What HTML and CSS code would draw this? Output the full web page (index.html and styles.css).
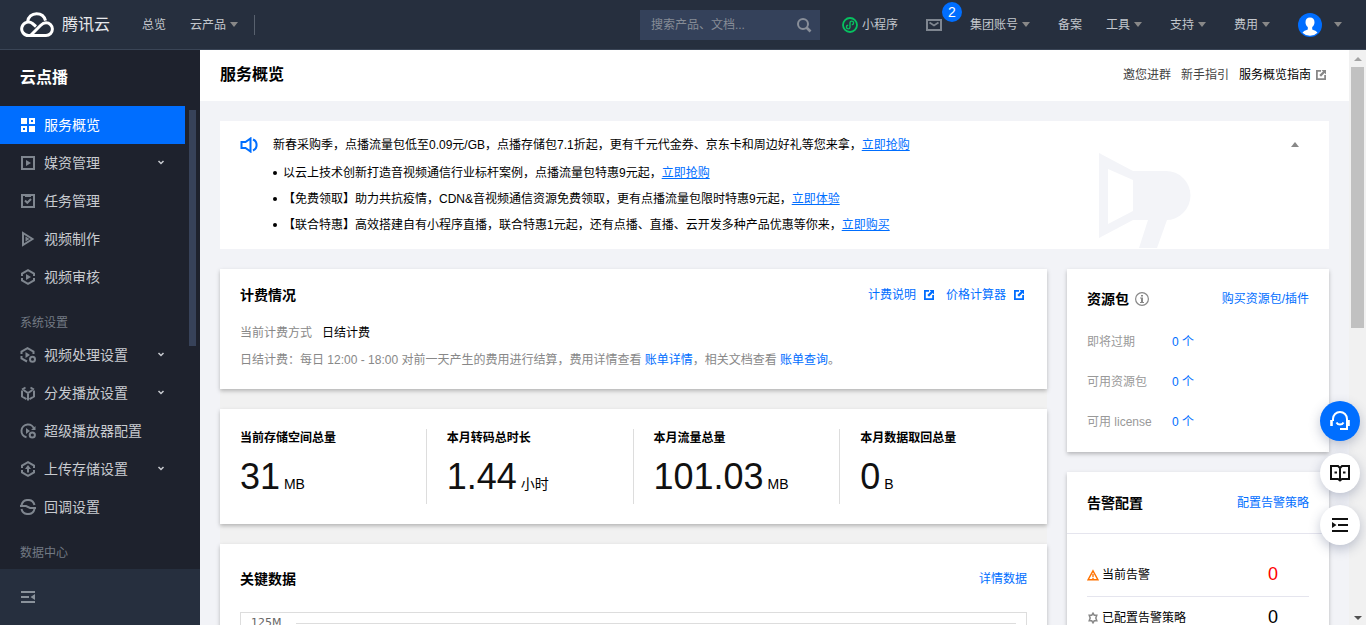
FILE: index.html
```
<!DOCTYPE html>
<html lang="zh-CN">
  <head>
    <meta charset="UTF-8">
    <meta name="viewport" content="width=device-width, initial-scale=1.0">
    <title>服务概览 - 云点播</title>
    <link rel="stylesheet" href="styles.css">
  </head>
  <body>
    <!-- shared icons -->
    <svg class="sprite" aria-hidden="true">
      <symbol id="share" viewBox="0 0 10 10">
        <path d="M5 0H0v10h10V5H8.200v3.200H1.800V1.800H5z"/>
        <path d="M5.500 0H10v4.500L8.600 3.100 5 6.700 3.300 5l3.600-3.600z"/>
      </symbol>
      <symbol id="chevron" viewBox="0 0 8 8">
        <path d="M1.500 2 4 4.500 6.500 2" fill="none" stroke="currentColor" stroke-width="1.500"/>
      </symbol>
    </svg>

    <header class="topbar">
      <a class="logo" href="#">
        <svg width="34" height="26" viewBox="0 0 34 26" fill="none" stroke="#fff" stroke-width="3">
          <path d="M11 23.500H8.500a6.700 6.700 0 1 1 4-12l3.500 3M7.500 10C8 5 12 1.700 16.500 1.700c4.500 0 8 2.800 9 7"/>
          <path d="M10.500 23.500 20.500 13.500c1.600-1.600 3.200-2.800 5.500-2.800a6.400 6.400 0 0 1 0 12.800H10"/>
        </svg>
        <span>腾讯云</span>
      </a>
      <nav class="nav-left">
        <a href="#">总览</a>
        <button>云产品<i class="caret"></i></button>
      </nav>
      <form class="search">
        <input type="text" placeholder="搜索产品、文档..." aria-label="搜索产品、文档">
        <button type="button" aria-label="搜索">
          <svg width="16" height="16" viewBox="0 0 16 16" fill="none" stroke="#888e99" stroke-width="2">
            <circle cx="7" cy="7" r="5"/><path d="m10.500 10.500 4 4" stroke-width="2.600"/>
          </svg>
        </button>
      </form>
      <nav class="nav-right">
        <a class="mini" href="#">
          <svg width="16" height="16" viewBox="0 0 16 16" fill="none" stroke="#07c160">
            <circle cx="8" cy="8" r="7" stroke-width="1.800"/>
            <path d="M6.200 8.300a1.800 1.800 0 1 0 1.800 1.900V5.800a1.800 1.800 0 1 1 1.800 1.900" stroke-width="1.400"/>
          </svg>
          小程序
        </a>
        <a class="mail" href="#" aria-label="消息">
          <svg width="16" height="12" viewBox="0 0 16 12" fill="none" stroke="#7f8690" stroke-width="2">
            <path d="M1 1h14v10H1z"/><path d="m3.500 3.500 4.500 3 4.500-3" stroke-width="1.800"/>
          </svg>
          <span class="badge">2</span>
        </a>
        <button>集团账号<i class="caret"></i></button>
        <a class="record" href="#">备案</a>
        <button>工具<i class="caret"></i></button>
        <button>支持<i class="caret"></i></button>
        <button>费用<i class="caret"></i></button>
        <button class="user" aria-label="账号">
          <svg width="24" height="24" viewBox="0 0 24 24">
            <circle cx="12" cy="12" r="12" fill="#006eff"/>
            <path d="M12 4.500c-2.900 0-4.500 2-4.500 4.700 0 2 .9 3.800 2.300 4.900v2.400c-2.500.8-4.300 1.800-5.300 3.200a10.700 10.700 0 0 0 15 0c-1-1.400-2.800-2.400-5.300-3.200v-2.400c1.400-1.100 2.300-2.900 2.300-4.900 0-2.700-1.600-4.700-4.500-4.700z" fill="#fff"/>
          </svg>
          <i class="caret"></i>
        </button>
      </nav>
    </header>

    <div class="page">
      <aside class="sidebar">
        <h2>云点播</h2>
        <div class="menu">
          <nav class="menu-list">
            <a class="active" href="#">
              <svg viewBox="0 0 16 16"><path d="M1 1h6v6H1zM9 1h6v6H9zm2 2v2h2V3zM1 9h6v6H1zm2 2v2h2v-2zM9 9h6v6H9z" fill="#fff" fill-rule="evenodd"/></svg>
              服务概览
            </a>
            <a href="#">
              <svg viewBox="0 0 16 16"><path class="line" d="M2 2h12v12H2z"/><path d="M6 5v6l5-3z"/></svg>
              媒资管理
              <svg class="chevron"><use href="#chevron"/></svg>
            </a>
            <a href="#">
              <svg viewBox="0 0 16 16"><path class="line" d="M2 2h12v12H2z"/><path class="line" d="m5 7.500 2.300 2.300L11 6"/><path d="M5 2h6v2H5z"/></svg>
              任务管理
            </a>
            <a href="#">
              <svg viewBox="0 0 16 16"><path class="line" d="M3 2v12l9.500-6z"/><path d="M5.500 5.500v5L9.500 8z"/></svg>
              视频制作
            </a>
            <a href="#">
              <svg viewBox="0 0 16 16"><path class="line" d="M2 7V4.500l6-3.300 6 3.300V7M2 9v2.500l6 3.300 6-3.300V9"/><path d="M6 5v6l5-3z"/></svg>
              视频审核
            </a>
            <h3>系统设置</h3>
            <a href="#">
              <svg viewBox="0 0 16 16"><path class="line" d="M1.500 7V4.500l6-3.300 6 3.300V7M1.500 9v2.500l5.500 3"/><path d="M5.500 5v6l4.500-3z"/><circle class="line" cx="12.500" cy="12.300" r="2.500"/></svg>
              视频处理设置
              <svg class="chevron"><use href="#chevron"/></svg>
            </a>
            <a href="#">
              <svg viewBox="0 0 16 16"><path class="line" d="M2 5.500v6l4.500 2.600M14 5.500v6l-4.500 2.600M3.500 5 8 8l4.500-3M8 8v7.500M2 4.500l3.500-2M14 4.500l-3.500-2"/></svg>
              分发播放设置
              <svg class="chevron"><use href="#chevron"/></svg>
            </a>
            <a href="#">
              <svg viewBox="0 0 16 16"><path class="line" d="M6.500 14.300A6.500 6.500 0 1 1 14.300 6.500"/><path d="M6 5v6l4-3zM15.500 3v4H11z"/><circle class="line" cx="12.300" cy="12" r="2.600"/></svg>
              超级播放器配置
            </a>
            <a href="#">
              <svg viewBox="0 0 16 16"><path class="line" d="M2 7V4.500l6-3.300 6 3.300V7M2 9v2.500l6 3.300 6-3.300V9M8 7v4.500"/><path d="M8 4 5 8h6z"/></svg>
              上传存储设置
              <svg class="chevron"><use href="#chevron"/></svg>
            </a>
            <a href="#">
              <svg viewBox="0 0 16 16"><path class="line" d="M1.500 6a6.700 6.700 0 0 1 13 0M14.500 10a6.700 6.700 0 0 1-13 0M0 7h6l4 2h6"/></svg>
              回调设置
            </a>
            <h3>数据中心</h3>
          </nav>
          <div class="menu-scroll"></div>
        </div>
        <div class="sidebar-foot">
          <button aria-label="收起菜单">
            <svg width="14" height="12" viewBox="0 0 14 12" fill="#8a929b"><path d="M0 0h14v2H0zM0 5h8v2H0zM0 10h14v2H0zM14 3v6L9.500 6z"/></svg>
          </button>
        </div>
      </aside>

      <main class="main">
        <div class="page-head">
          <h1>服务概览</h1>
          <div class="head-links">
            <a class="soft" href="#">邀您进群</a>
            <a class="soft" href="#">新手指引</a>
            <a class="guide" href="#">服务概览指南<svg class="share"><use href="#share"/></svg></a>
          </div>
        </div>

        <div class="content">
          <section class="notice">
            <svg class="horn" width="18" height="16" viewBox="0 0 18 16" fill="none" stroke="#006eff" stroke-width="2">
              <path d="M1.500 5v6h4l5 3.500v-13l-5 3.500z"/><path d="M13 2.500a6 6 0 0 1 0 11"/>
            </svg>
            <div class="notice-text">
              <p>新春采购季，点播流量包低至0.09元/GB，点播存储包7.1折起，更有千元代金券、京东卡和周边好礼等您来拿，<a href="#">立即抢购</a></p>
              <ul>
                <li>以云上技术创新打造音视频通信行业标杆案例，点播流量包特惠9元起，<a href="#">立即抢购</a></li>
                <li>【免费领取】助力共抗疫情，CDN&amp;音视频通信资源免费领取，更有点播流量包限时特惠9元起，<a href="#">立即体验</a></li>
                <li>【联合特惠】高效搭建自有小程序直播，联合特惠1元起，还有点播、直播、云开发多种产品优惠等你来，<a href="#">立即购买</a></li>
              </ul>
            </div>
            <button class="fold" aria-label="收起"></button>
            <svg class="megaphone" width="92" height="95" viewBox="0 0 92 95" fill="#f3f4f8">
              <path d="M0 0l34 18h33a24.500 24.500 0 0 1 0 49H34L0 85zM9 16v55l25-13V27z" fill-rule="evenodd"/>
              <path d="M49 67h19L58 95H40z"/>
            </svg>
          </section>

          <div class="columns">
            <div class="col-left">
              <section class="card billing">
                <div class="card-head">
                  <h2>计费情况</h2>
                  <div class="card-links">
                    <a href="#">计费说明<svg class="share"><use href="#share"/></svg></a>
                    <a href="#">价格计算器<svg class="share"><use href="#share"/></svg></a>
                  </div>
                </div>
                <p class="mode">当前计费方式<b>日结计费</b></p>
                <p>日结计费：每日 12:00 - 18:00 对前一天产生的费用进行结算，费用详情查看 <a href="#">账单详情</a>，相关文档查看 <a href="#">账单查询</a>。</p>
              </section>

              <section class="card stats">
                <div class="stat">
                  <h3>当前存储空间总量</h3>
                  <p><strong>31</strong> MB</p>
                </div>
                <div class="stat">
                  <h3>本月转码总时长</h3>
                  <p><strong>1.44</strong> 小时</p>
                </div>
                <div class="stat">
                  <h3>本月流量总量</h3>
                  <p><strong>101.03</strong> MB</p>
                </div>
                <div class="stat">
                  <h3>本月数据取回总量</h3>
                  <p><strong>0</strong> B</p>
                </div>
              </section>

              <section class="card key-data">
                <div class="card-head">
                  <h2>关键数据</h2>
                  <a href="#">详情数据</a>
                </div>
                <div class="chart">
                  <div class="tick"><span>125M</span><i></i></div>
                </div>
              </section>
            </div>

            <div class="col-right">
              <section class="card resource">
                <div class="card-head">
                  <h2>资源包</h2>
                  <svg class="info" width="14" height="14" viewBox="0 0 14 14" fill="#888">
                    <circle cx="7" cy="7" r="6.400" fill="none" stroke="#888" stroke-width="1.200"/>
                    <path d="M6 3h2v1.500H6zM5 5.500h3V10h1v1H5v-1h1V6.500H5z"/>
                  </svg>
                  <a href="#">购买资源包/插件</a>
                </div>
                <dl>
                  <dt>即将过期</dt><dd><a href="#">0 个</a></dd>
                  <dt>可用资源包</dt><dd><a href="#">0 个</a></dd>
                  <dt>可用 license</dt><dd><a href="#">0 个</a></dd>
                </dl>
              </section>

              <section class="card alarm">
                <div class="card-head">
                  <h2>告警配置</h2>
                  <a href="#">配置告警策略</a>
                </div>
                <div class="alarm-body">
                  <div class="alarm-row">
                    <svg width="12" height="12" viewBox="0 0 12 12" fill="none" stroke="#ff7200" stroke-width="1.400">
                      <path d="M6 1.800 11 10.800H1z"/><path d="M6 5v3M6 8.700v1.200"/>
                    </svg>
                    <span>当前告警</span>
                    <b class="red">0</b>
                  </div>
                  <div class="alarm-row">
                    <svg width="12" height="12" viewBox="0 0 12 12" fill="none" stroke="#888" stroke-width="1.500">
                      <path d="M6 1.200 7.200 3.200h2.600L8.800 6l1 2.800H7.200L6 10.800 4.800 8.800H2.200l1-2.800-1-2.800h2.600z"/>
                    </svg>
                    <span>已配置告警策略</span>
                    <b>0</b>
                  </div>
                </div>
              </section>
            </div>
          </div>
        </div>
      </main>

      <div class="scrollbar">
        <i class="up"></i>
        <div class="track"><div class="thumb"></div></div>
        <i class="down"></i>
      </div>
    </div>

    <!-- floating tools -->
    <div class="float-tools">
      <button class="primary" aria-label="在线客服">
        <svg width="20" height="20" viewBox="0 0 20 20" fill="none" stroke="#fff" stroke-width="2">
          <path d="M3 10V8a7 7 0 0 1 14 0v10h-7"/><path d="M6.500 11.500c1.500 2.700 5.500 2.700 7 0"/><path d="M1.500 9v6M18.500 9v6" stroke-width="2.600"/>
        </svg>
      </button>
      <button aria-label="文档">
        <svg width="20" height="18" viewBox="0 0 20 18" fill="none" stroke="#111" stroke-width="2">
          <path d="M10 4 8 2H1v13h7l2 1.500 2-1.500h7V2h-7zM10 4v12.500M4.500 8.500h2.500M13 8.500h2.500"/>
        </svg>
      </button>
      <button aria-label="展开">
        <svg width="16" height="14" viewBox="0 0 16 14" fill="#111"><path d="M0 0h16v2H0zM6 6h10v2H6zM0 12h16v2H0zM0 4v6l4.500-3z"/></svg>
      </button>
    </div>
  </body>
</html>
```

FILE: styles.css
```
*{
    margin: 0;
    padding: 0;
    box-sizing: border-box;
}

body{
    display: flex;
    flex-direction: column;
    height: 100vh;
    overflow: hidden;
    font-family: "Liberation Sans", "Noto Sans CJK SC", sans-serif;
    font-size: 12px;
    line-height: 18px;
    color: #000;
}

a{
    color: #006eff;
    text-decoration: none;
}

button{
    border: 0;
    background: none;
    font: inherit;
    color: inherit;
    cursor: pointer;
}

svg{
    display: block;
    flex: none;
}

.sprite{
    position: absolute;
    width: 0;
    height: 0;
}

.share{
    width: 10px;
    height: 10px;
    fill: currentColor;
}

/* top bar */
.topbar{
    display: flex;
    align-items: center;
    flex: none;
    height: 50px;
    padding: 0 10px 0 20px;
    background: #262f3e;
    border-bottom: 1px solid #3a4556;
    color: #c3c7cd;
}

.topbar a{
    color: inherit;
}

.topbar .logo{
    display: flex;
    align-items: center;
    gap: 8px;
    font-size: 16px;
    color: #e6e8eb;
}

.caret{
    border: 4px solid transparent;
    border-top: 5px solid #888;
    border-bottom: 0;
}

.topbar button{
    display: flex;
    align-items: center;
    gap: 4px;
}

.nav-left{
    display: flex;
    align-items: center;
    gap: 24px;
    height: 20px;
    margin-left: 32px;
    padding-right: 16px;
    border-right: 1px solid #58616e;
}

.search{
    display: flex;
    width: 180px;
    height: 30px;
    margin-left: auto;
    background: #34415a;
}

.search input{
    flex: 1;
    min-width: 0;
    padding-left: 11px;
    border: 0;
    outline: 0;
    background: none;
    font: inherit;
    color: #fff;
}

.search input::placeholder{
    color: #868c96;
}

.search button{
    padding: 0 8px;
}

.nav-right{
    display: flex;
    align-items: center;
    margin-left: 8px;
}

.nav-right > *{
    padding: 0 14px;
}

.mini{
    display: flex;
    align-items: center;
    gap: 4px;
}

.mail{
    position: relative;
}

.badge{
    position: absolute;
    top: -17px;
    right: -6px;
    width: 20px;
    height: 20px;
    border-radius: 50%;
    background: #006eff;
    color: #fff;
    font-size: 14px;
    line-height: 20px;
    text-align: center;
}

.nav-right .record{
    padding-right: 10px;
}

.nav-right .user{
    gap: 12px;
}

/* side menu */
.page{
    display: flex;
    flex: 1;
    min-height: 0;
}

.sidebar{
    display: flex;
    flex-direction: column;
    flex: none;
    width: 200px;
    background: #1e222d;
    color: #c8cbd0;
}

.sidebar h2{
    flex: none;
    padding: 0 20px;
    font-size: 16px;
    line-height: 56px;
    color: #fff;
}

.menu{
    display: flex;
    flex: 1;
    gap: 4px;
    min-height: 0;
    overflow: hidden;
}

.menu-list{
    width: 185px;
}

.menu-list a{
    display: flex;
    align-items: center;
    gap: 8px;
    height: 38px;
    padding: 0 20px;
    font-size: 14px;
    color: inherit;
}

.menu-list a.active{
    background: #006eff;
    color: #fff;
}

.menu-list svg{
    width: 16px;
    height: 16px;
    fill: #7f868f;
}

.menu-list .line{
    fill: none;
    stroke: #7f868f;
    stroke-width: 2;
}

.menu-list .chevron{
    width: 8px;
    height: 8px;
    margin-left: auto;
}

.menu-list h3{
    height: 40px;
    padding: 18px 20px 0;
    font-size: 12px;
    font-weight: normal;
    color: #737a84;
}

.menu-scroll{
    width: 7px;
    height: 236px;
    margin-top: 4px;
    background: #374259;
}

.sidebar-foot{
    display: flex;
    align-items: center;
    flex: none;
    height: 56px;
    padding: 0 21px;
    background: #262f3e;
}

/* main */
.main{
    flex: 1;
    min-width: 0;
    overflow: hidden;
    background: #f2f3f7;
}

.page-head{
    display: flex;
    align-items: center;
    justify-content: space-between;
    height: 51px;
    padding: 0 23px 2px 20px;
    background: #fff;
}

.page-head h1{
    font-size: 16px;
}

.head-links{
    display: flex;
    gap: 10px;
}

.head-links a{
    color: #000;
}

.head-links .soft{
    color: #444;
}

.guide{
    display: flex;
    align-items: center;
    gap: 5px;
}

.guide .share{
    fill: #888;
}

.content{
    padding: 20px;
}

.notice{
    position: relative;
    display: flex;
    align-items: flex-start;
    padding: 15px 30px 11px 20px;
    background: #fff;
}

.horn{
    margin-top: 1px;
}

.notice-text{
    flex: 1;
    margin-left: 15px;
}

.notice-text a{
    text-decoration: underline;
}

.notice-text ul{
    margin-top: 6px;
    list-style: none;
}

.notice-text li{
    display: flex;
    align-items: center;
    line-height: 26px;
}

.notice-text li::before{
    content: "";
    width: 4px;
    height: 4px;
    margin-right: 6px;
    border-radius: 50%;
    background: #000;
}

.fold{
    margin-top: 6px;
    border: 4px solid transparent;
    border-top: 0;
    border-bottom: 5px solid #888;
}

.megaphone{
    position: absolute;
    right: 138px;
    bottom: 1px;
}

.columns{
    display: flex;
    align-items: flex-start;
    gap: 20px;
    margin-top: 20px;
}

.col-left{
    flex: 1;
    display: flex;
    flex-direction: column;
    gap: 20px;
    background: #f1f1f1;
}

.col-right{
    width: 262px;
    display: flex;
    flex-direction: column;
    gap: 20px;
}

.card{
    background: #fff;
    box-shadow: 0 2px 4px rgba(0, 0, 0, 0.25);
}

.card-head{
    display: flex;
    align-items: center;
    justify-content: space-between;
}

.card h2{
    font-size: 14px;
    color: #000;
}

.billing{
    padding: 17px 20px 20px;
    color: #888;
}

.billing p{
    margin-top: 9px;
}

.billing .mode{
    margin-top: 20px;
}

.billing b{
    margin-left: 10px;
    font-weight: normal;
    color: #000;
}

.card-links{
    display: flex;
    gap: 12px;
    padding-right: 3px;
}

.card-links a{
    display: flex;
    align-items: center;
    gap: 8px;
}

.stats{
    display: grid;
    grid-template-columns: repeat(4, 1fr);
    padding: 20px 0;
}

.stat{
    height: 75px;
    padding-left: 20px;
    border-right: 1px solid #ddd;
}

.stat:last-child{
    border-right: 0;
}

.stat h3{
    font-size: 12px;
}

.stat p{
    margin-top: 10px;
    font-size: 14px;
    line-height: 40px;
}

.stat strong{
    font-size: 36px;
    font-weight: normal;
    color: #111;
}

.key-data{
    padding: 0 20px 20px;
}

.key-data .card-head{
    height: 68px;
    padding-top: 2px;
}

.chart{
    height: 260px;
    border: 1px solid #ddd;
}

.tick{
    display: flex;
    align-items: center;
    justify-content: space-between;
    padding: 0 10px;
    font-family: "DejaVu Sans", sans-serif;
    font-size: 11px;
    line-height: 20px;
    color: #666;
}

.tick i{
    width: calc(100% - 45px);
    height: 1px;
    background: #ddd;
}

.resource{
    padding: 20px 20px 10px;
}

.resource .card-head{
    height: 20px;
    margin-bottom: 13px;
}

.resource .info{
    margin: 0 auto 0 6px;
}

.resource dl{
    display: grid;
    grid-template-columns: 85px 1fr;
    line-height: 40px;
}

.resource dt{
    color: #999;
}

.alarm .card-head{
    height: 62px;
    padding: 0 20px;
    border-bottom: 1px solid #e5e5ee;
}

.alarm-body{
    padding: 20px;
}

.alarm-row{
    display: flex;
    align-items: center;
    gap: 3px;
    height: 43px;
    border-bottom: 1px solid #e5e5ee;
}

.alarm-row b{
    width: 72px;
    margin-left: auto;
    padding-bottom: 3px;
    text-align: center;
    font-size: 18px;
    font-weight: normal;
}

.alarm-row .red{
    color: #f00;
}

/* page scrollbar */
.scrollbar{
    display: flex;
    flex-direction: column;
    align-items: center;
    flex: none;
    width: 17px;
    padding: 7px 0 5px;
    background: #f1f1f1;
}

.scrollbar .up, .scrollbar .down{
    border: 4px solid transparent;
}

.scrollbar .up{
    border-top: 0;
    border-bottom-color: #a3a3a3;
}

.scrollbar .down{
    border-bottom: 0;
    border-top-color: #505050;
}

.track{
    flex: 1;
    width: 13px;
    padding: 6px 0;
}

.thumb{
    height: 48%;
    background: #c1c1c1;
}

.float-tools{
    position: fixed;
    right: 6px;
    bottom: 80px;
    display: flex;
    flex-direction: column;
    gap: 12px;
}

.float-tools button{
    display: flex;
    align-items: center;
    justify-content: center;
    width: 40px;
    height: 40px;
    border-radius: 50%;
    background: #fff;
    box-shadow: 0 4px 12px rgba(55, 70, 110, 0.3);
}

.float-tools .primary{
    background: #006eff;
}
```
